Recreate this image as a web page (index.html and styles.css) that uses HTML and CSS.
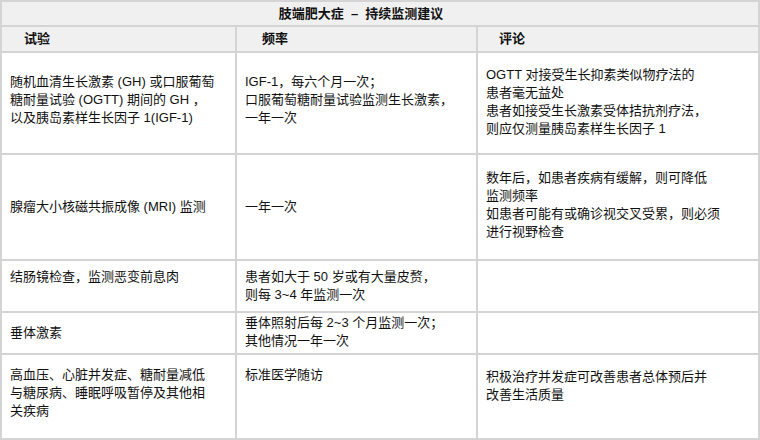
FILE: index.html
```html
<!DOCTYPE html>
<html lang="zh-CN">
<head>
<meta charset="utf-8">
<title>肢端肥大症 – 持续监测建议</title>
<link rel="stylesheet" href="styles.css">
</head>
<body>
<div class="grid">
  <div class="title">肢端肥大症 &nbsp;–&nbsp; 持续监测建议</div>

  <div class="head h1">试验</div>
  <div class="head h2">频率</div>
  <div class="head h3">评论</div>

  <div class="cell p20">随机血清生长激素 (GH) 或口服葡萄<br>糖耐量试验 (OGTT) 期间的 GH ，<br>以及胰岛素样生长因子 1(IGF-1)</div>
  <div class="cell p20">IGF-1，每六个月一次；<br>口服葡萄糖耐量试验监测生长激素，<br>一年一次</div>
  <div class="cell p13">OGTT 对接受生长抑素类似物疗法的<br>患者毫无益处<br>患者如接受生长激素受体拮抗剂疗法，<br>则应仅测量胰岛素样生长因子 1</div>

  <div class="cell p43">腺瘤大小核磁共振成像 (MRI) 监测</div>
  <div class="cell p43">一年一次</div>
  <div class="cell p14">数年后，如患者疾病有缓解，则可降低<br>监测频率<br>如患者可能有或确诊视交叉受累，则必须<br>进行视野检查</div>

  <div class="cell p7">结肠镜检查，监测恶变前息肉</div>
  <div class="cell p7">患者如大于 50 岁或有大量皮赘，<br>则每 3~4 年监测一次</div>
  <div class="cell"></div>

  <div class="cell p11">垂体激素</div>
  <div class="cell p1">垂体照射后每 2~3 个月监测一次；<br>其他情况一年一次</div>
  <div class="cell"></div>

  <div class="cell p11">高血压、心脏并发症、糖耐量减低<br>与糖尿病、睡眠呼吸暂停及其他相<br>关疾病</div>
  <div class="cell p11">标准医学随访</div>
  <div class="cell p13">积极治疗并发症可改善患者总体预后并<br>改善生活质量</div>
</div>
</body>
</html>
```
FILE: styles.css
```css
html, body {
  margin: 0;
  padding: 0;
  background: #ffffff;
}

body {
  font-family: "Liberation Sans", "Noto Sans CJK SC", sans-serif;
  font-size: 13px;
  line-height: 18px;
  color: #111111;
}

.grid {
  width: 760px;
  height: 440px;
  box-sizing: border-box;
  display: grid;
  grid-template-columns: 233px 239px 280px;
  grid-template-rows: 23px 24px 100px 104px 50px 40px 83px;
  gap: 2px;
  padding: 2px;
  background: #d4d4d4;
}

.title {
  grid-column: 1 / 4;
  background: #f0f0f0;
  font-weight: bold;
  display: flex;
  align-items: center;
  justify-content: center;
  padding-right: 38px;
  white-space: nowrap;
}

.head {
  background: #f0f0f0;
  font-weight: bold;
  display: flex;
  align-items: center;
  white-space: nowrap;
}

.h1 { padding-left: 22px; }
.h2 { padding-left: 25px; }
.h3 { padding-left: 21px; }

.cell {
  background: #ffffff;
  padding-left: 8px;
  white-space: nowrap;
  overflow: hidden;
}

.p1 { padding-top: 1px; }
.p7 { padding-top: 7px; }
.p11 { padding-top: 11px; }
.p13 { padding-top: 13px; }
.p14 { padding-top: 14px; }
.p20 { padding-top: 20px; }
.p43 { padding-top: 43px; }
```
